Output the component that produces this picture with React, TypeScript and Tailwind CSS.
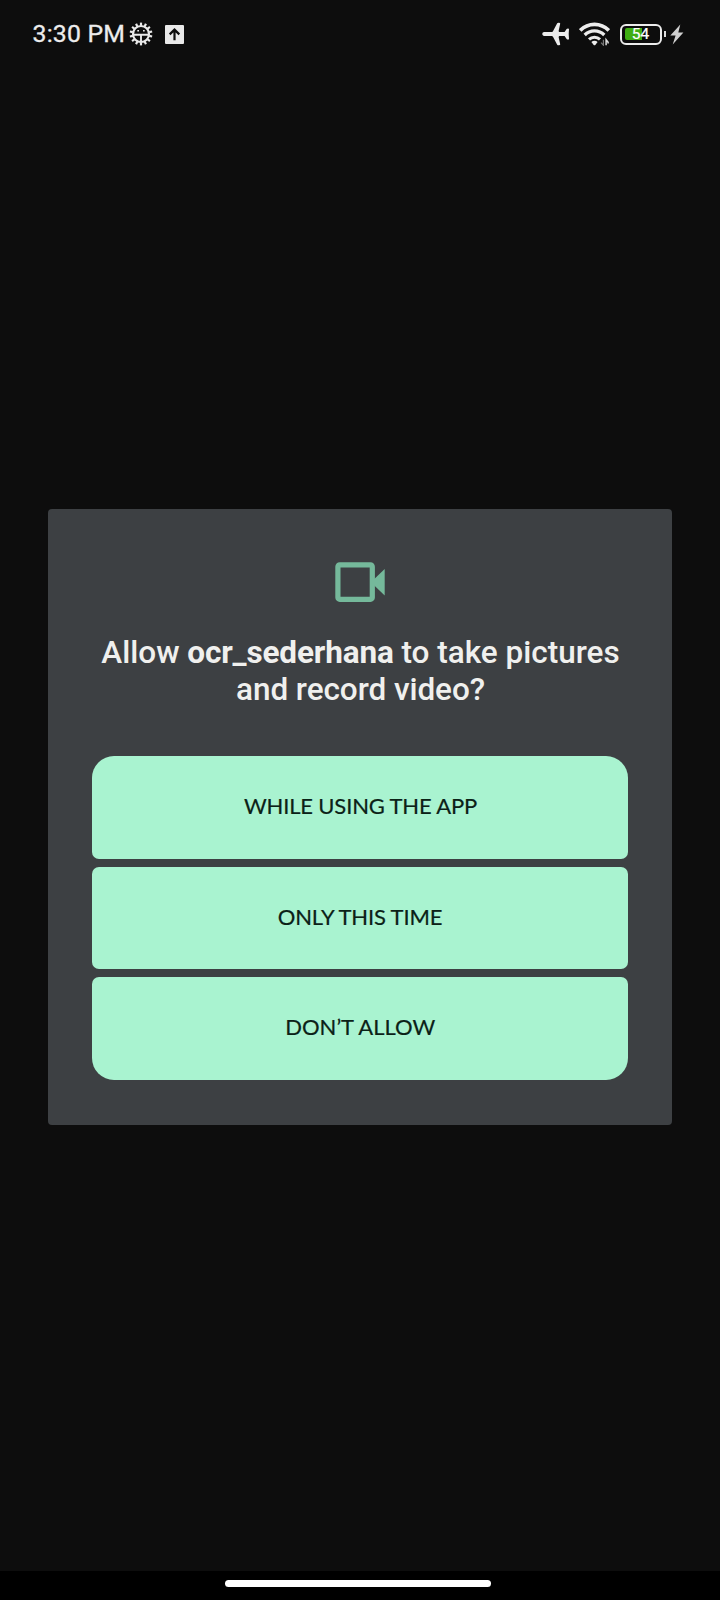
import React from "react";

const TEETH = Array.from({ length: 14 }, (_, i) => i * (360 / 14));

function DebugIcon() {
  return (
    <svg className="block" width="24" height="24" viewBox="0 0 24 24" fill="none" stroke="#e9e9e9">
      <circle cx="12" cy="12" r="8" strokeWidth="2.2" />
      {TEETH.map((a) => (
        <path key={a} d="M12 .6v3" strokeWidth="2.2" transform={`rotate(${a} 12 12)`} />
      ))}
      <path d="M4 12.700h16M12 12.700V20" strokeWidth="1.900" />
      <path d="M8.300 8.800h1.700M14 8.800h1.700" strokeWidth="1.600" />
    </svg>
  );
}

function UploadIcon() {
  return (
    <svg className="block" width="19" height="19" viewBox="0 0 19 19">
      <rect width="19" height="19" rx="1" fill="#e9e9e9" />
      <path d="M9.500 15.300V4.800M4.700 9.400l4.800-4.800 4.800 4.800" fill="none" stroke="#0d0d0d" strokeWidth="2.200" />
    </svg>
  );
}

function PlaneIcon() {
  return (
    <svg className="block" width="28" height="24" viewBox="0 0 28 24">
      <path
        d="M.3 12c0-1.100.8-1.900 1.800-1.900h7.400c.9 0 1.200-.4 1.600-1.100L15.200 1.300c.5-.9 3.200-.6 3 .5L16.700 8.600c-.1 1 .3 1.500 1.100 1.500h4.800l2-3.100c.5-.8 2.400-.8 2.400.1L26.700 12l.3 4.900c0 .9-1.900.9-2.400.1l-2-3.100h-4.800c-.8 0-1.200.5-1.100 1.500l1.500 6.800c.2 1.100-2.500 1.400-3 .5L11.100 15c-.4-.7-.7-1.100-1.600-1.100H2.100C1.100 13.900.3 13.100.3 12z"
        fill="#ececec"
      />
    </svg>
  );
}

function WifiIcon() {
  return (
    <svg className="block" width="31" height="24" viewBox="0 0 31 24" fill="none">
      <path d="M1.200 8.400C9.200.3 21.800.3 29.800 8.400" stroke="#ececec" strokeWidth="3.600" />
      <path d="M5.700 13C11.200 7.600 19.800 7.600 25.300 13" stroke="#ececec" strokeWidth="3.300" />
      <path d="M10 17.400C13.100 14.400 17.900 14.400 21 17.400" stroke="#ececec" strokeWidth="3" />
      <path d="M12.400 20c1.800-1.600 4.400-1.600 6.200 0L16.300 22.900q-.8.800-1.600 0z" fill="#ececec" />
      <path d="M24.400 17.700v5.500l-2.400-2.500" stroke="#777777" strokeWidth="1.200" />
      <path d="M27.100 23.200v-5.500l2 2.500v1.300" stroke="#dddddd" strokeWidth="1.500" />
    </svg>
  );
}

function BoltIcon() {
  return (
    <svg className="block" width="14" height="21" viewBox="0 0 14 21">
      <path d="M10.300.4L.3 11.600h5.300L2.700 20.400 13.400 8.600H8.300z" fill="#d0d0d0" />
    </svg>
  );
}

function Battery() {
  return (
    <div className="flex items-center gap-[2px]">
      <div className="relative flex h-[21px] w-[42px] items-center rounded-[6px] border-2 border-[#ececec] pl-[3px]">
        <div className="h-[12px] w-[17px] rounded-l-[2px] bg-[#3fae12]" />
        <span className="absolute inset-0 flex items-center justify-center pt-px pr-px text-[15.500px] leading-none text-white [-webkit-text-stroke:0.200px_white]">
          54
        </span>
      </div>
      <div className="h-[6px] w-[2px] bg-[#dddddd]" />
    </div>
  );
}

function StatusBar() {
  return (
    <header className="flex h-[68px] items-center pr-[36px] pl-[32px]">
      <span className="w-[97px] pl-[0.500px] text-[24.800px] leading-[28px] tracking-[0.200px] whitespace-nowrap text-[#ececec] [-webkit-text-stroke:0.300px_#ececec]">
        3:30 PM
      </span>
      <DebugIcon />
      <div className="ml-[12px]">
        <UploadIcon />
      </div>
      <div className="ml-auto flex items-center">
        <PlaneIcon />
        <div className="ml-[9px]">
          <WifiIcon />
        </div>
        <div className="ml-[10px]">
          <Battery />
        </div>
        <div className="ml-[4px]">
          <BoltIcon />
        </div>
      </div>
    </header>
  );
}

function CameraIcon() {
  return (
    <svg className="block" width="50" height="40" viewBox="0 0 50 40">
      <rect x="2.900" y="2.900" width="34.400" height="34.400" rx="1.800" fill="none" stroke="#75b99b" strokeWidth="5.200" />
      <path d="M39 17.300l10.700-10.200v26.400L39 23.200z" fill="#75b99b" />
    </svg>
  );
}

const ACTIONS = [
  { label: "WHILE USING THE APP", shape: "rounded-t-[22px] rounded-b-[7px]", text: "pl-[1px] tracking-[-0.160px]" },
  { label: "ONLY THIS TIME", shape: "rounded-[7px]", text: "pt-[1px] tracking-[-0.140px]" },
  { label: "DON’T ALLOW", shape: "rounded-t-[7px] rounded-b-[22px]", text: "pl-[0.500px]" },
];

export default function App() {
  return (
    <div className="flex h-[1600px] w-[720px] flex-col bg-[#0d0d0d] font-['Roboto',sans-serif]">
      <StatusBar />
      <main className="flex-1 px-[48px] pt-[441px]">
        <section className="flex h-[616px] flex-col items-center rounded-[4px] bg-[#3d4043] px-[44px] pt-[53px]">
          <div className="-mr-[0.500px]">
            <CameraIcon />
          </div>
          <h1 className="mt-[32px] pl-px text-center text-[31.500px] leading-[37px] font-medium whitespace-nowrap text-[#f0f0ee]">
            Allow <b className="font-bold tracking-[-0.150px]">ocr_sederhana</b> to take pictures
            <br />
            <span className="tracking-[-0.060px]">and record video?</span>
          </h1>
          <div className="mt-[48px] flex w-full flex-col gap-[8px]">
            {ACTIONS.map((a) => (
              <button
                key={a.label}
                className={`flex h-[102.660px] items-center justify-center bg-[#a9f3d0] pb-[3px] font-['Lato',sans-serif] text-[22px] leading-[28px] text-[#0b2117] [-webkit-text-stroke:0.200px_#0b2117] ${a.shape}`}
              >
                <span className={a.text}>{a.label}</span>
              </button>
            ))}
          </div>
        </section>
      </main>
      <footer className="flex h-[29px] justify-center bg-black pt-[9px]">
        <div className="mr-[5px] h-[7px] w-[266px] rounded-full bg-white" />
      </footer>
    </div>
  );
}
